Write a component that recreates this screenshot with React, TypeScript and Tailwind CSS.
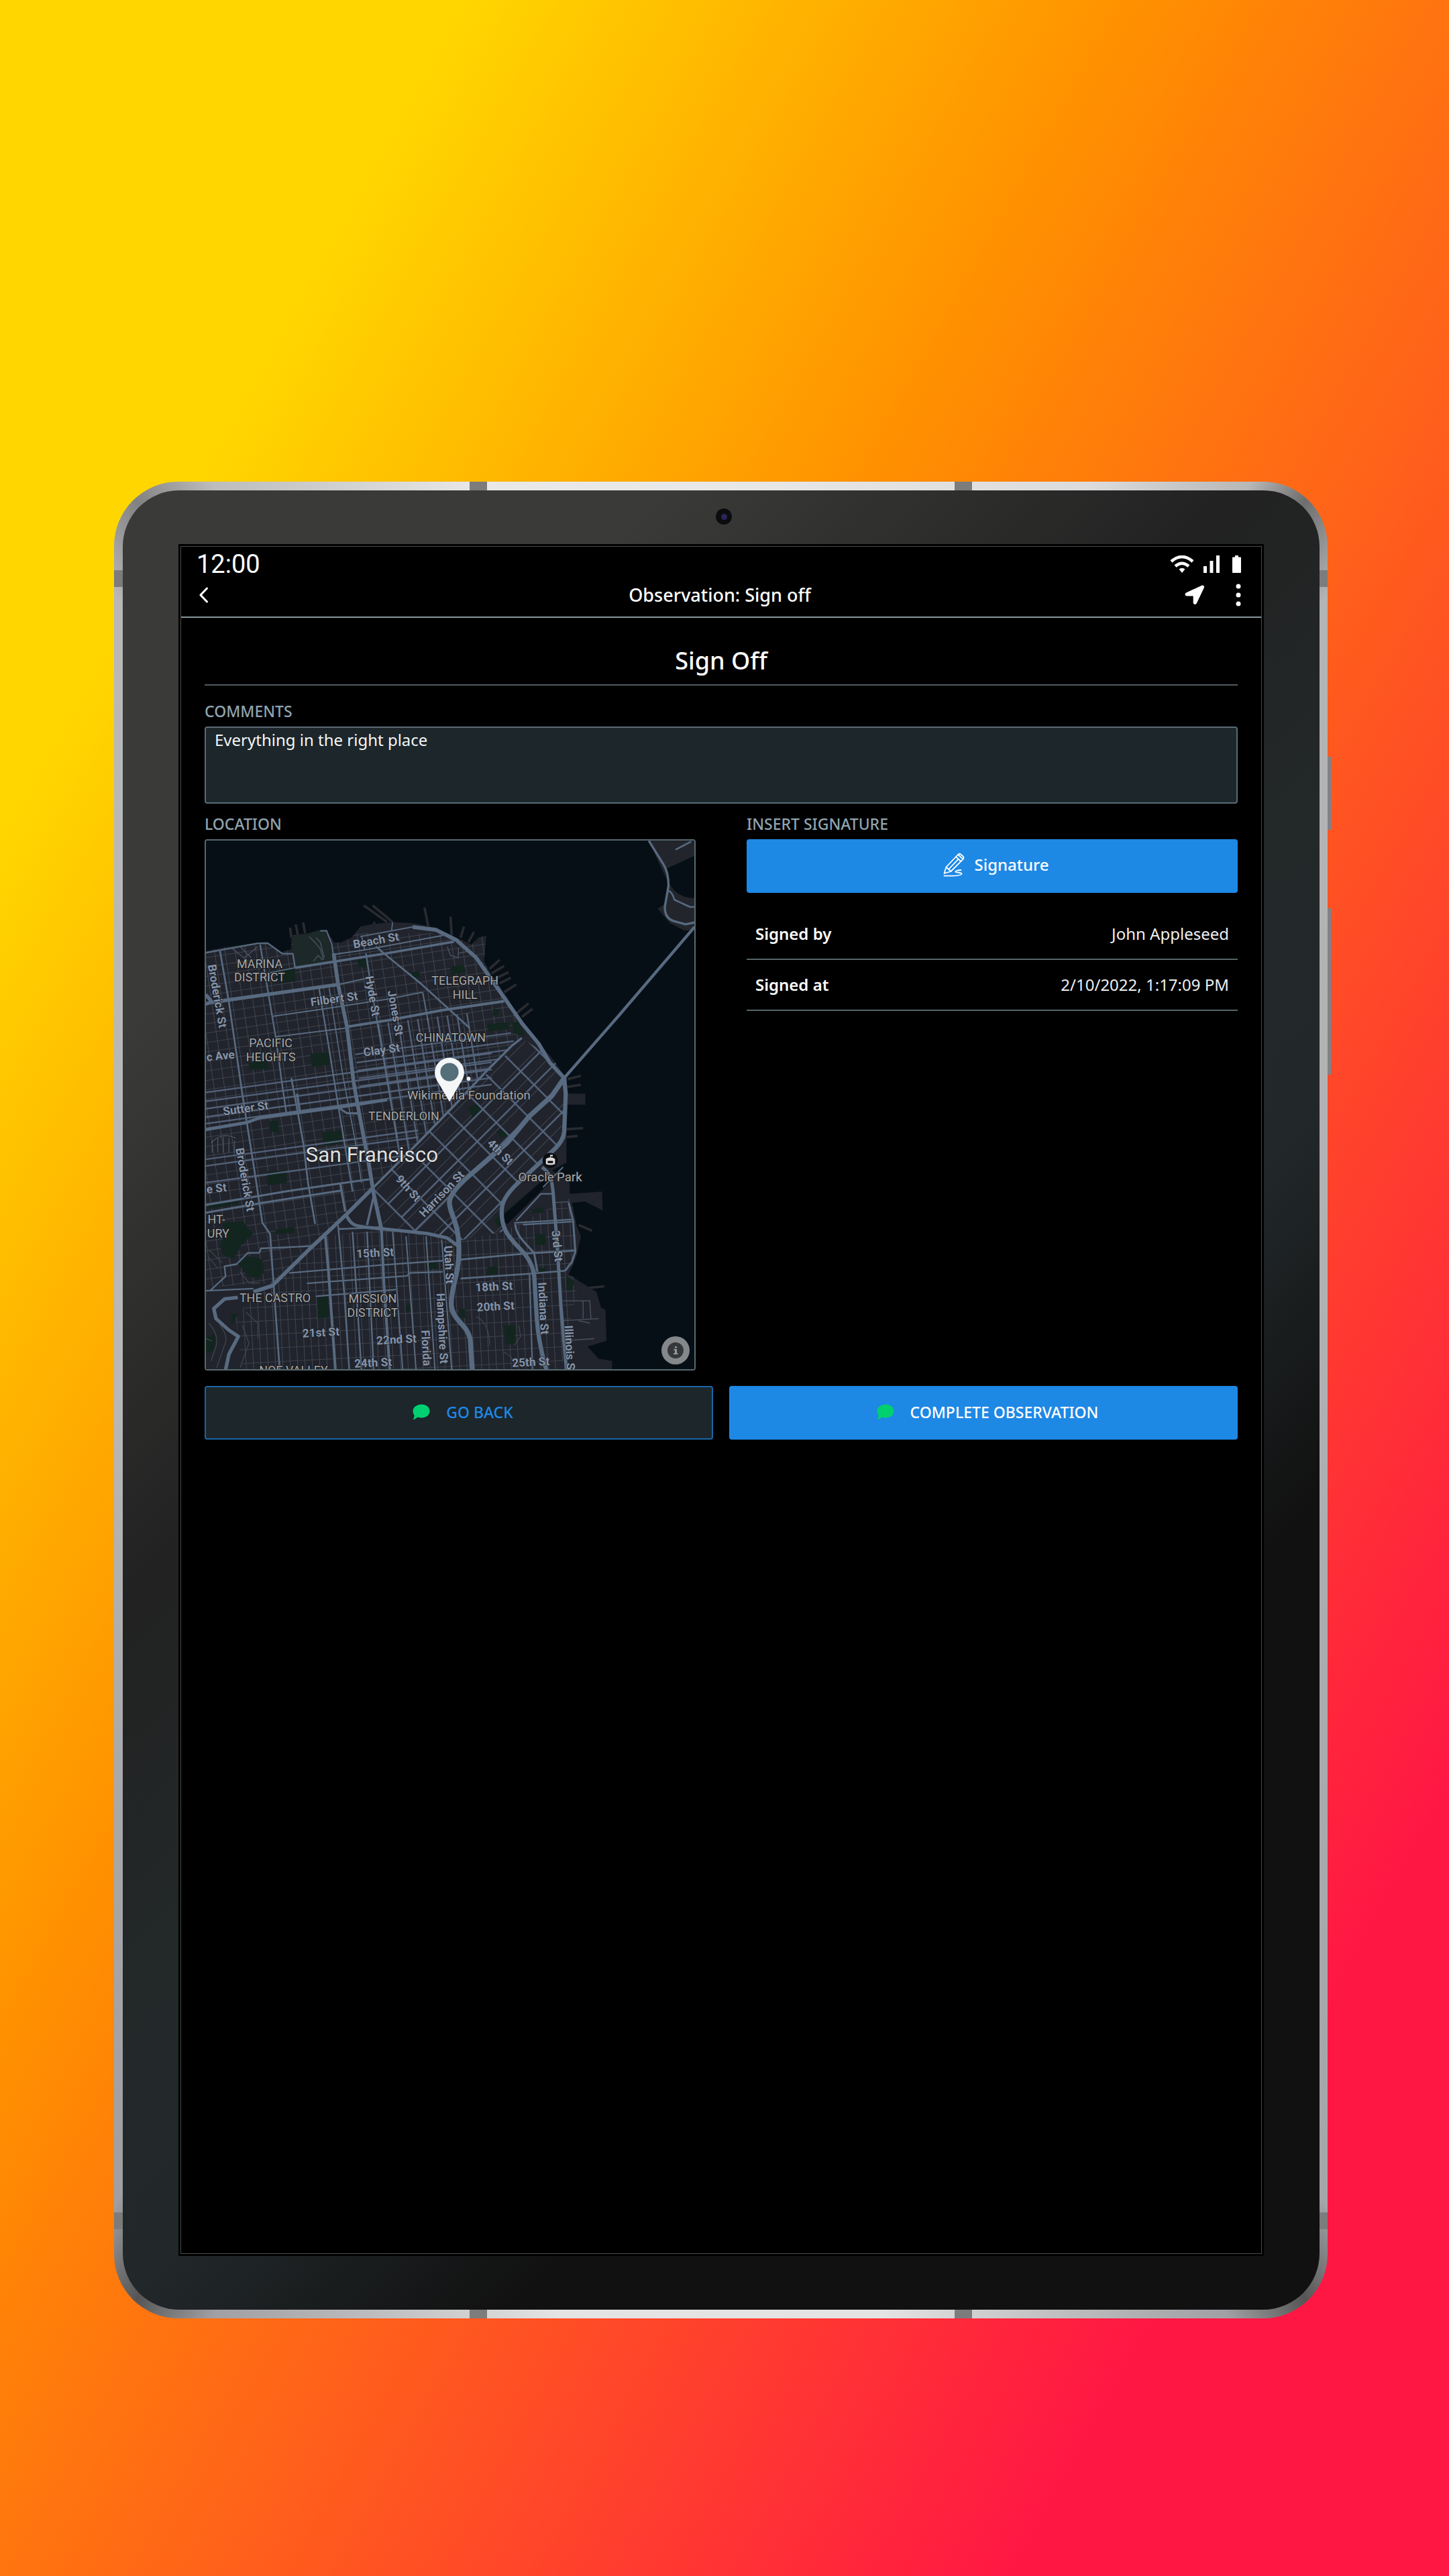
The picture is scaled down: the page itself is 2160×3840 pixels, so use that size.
import { ReactNode } from 'react';

type StreetLabel = {
  text: string;
  x: number;
  y: number;
  rotate: number;
};

type Road = {
  d: string;
  width: number;
};

const roads: Road[] = [
  { d: 'M45 568L280 525H325L390 572H437L447 635', width: 7 },
  { d: 'M447 635L620 608L860 570L1160 518', width: 11 },
  { d: 'M620 575L760 555L1110 490M740 495L975 452M560 470L588 468L612 530L622 600', width: 6 },
  { d: 'M320 660L447 635M760 555L745 490M880 470L885 430', width: 5 },
  { d: 'M45 798L70 790L640 710M45 755L75 790', width: 16 },
  { d: 'M640 710L780 680M345 853L560 822L870 775L1020 745', width: 6 },
  { d: 'M360 945L680 905M1020 745L1045 880', width: 6 },
  { d: 'M810 540L870 590L1010 705L1230 905', width: 8 },
  { d: 'M680 900L870 870L1110 825L1385 785', width: 12 },
  { d: 'M110 560L150 790L210 1200L232 1340L270 1580L300 1780L335 1830L350 2050L378 2440', width: 8 },
  { d: 'M290 530L325 740L360 945L385 1130L408 1290', width: 7 },
  { d: 'M430 1130L460 1290L485 1430L505 1600L537 1785', width: 8 },
  { d: 'M555 730L600 1000L640 1250L692 1560L705 1640', width: 7 },
  { d: 'M600 725L660 1110L720 1430L745 1600', width: 5 },
  { d: 'M765 570L785 700L830 960L905 1400', width: 7 },
  { d: 'M650 1605L672 1730M800 1660L770 1790M470 1290L455 1200', width: 10 },
  { d: 'M45 1362L230 1330L290 1308L640 1262L860 1228', width: 14 },
  { d: 'M640 1262L680 1288H730', width: 9 },
  { d: 'M45 1700L400 1640L650 1603L780 1585M45 1735L300 1690L660 1634', width: 9 },
  { d: 'M260 2090L345 2062L520 1890L680 1740L795 1625', width: 17 },
  { d: 'M795 1625L1000 1420L1160 1255L1310 1095L1420 985L1465 950', width: 10 },
  { d: 'M45 2085L260 2075M290 1895L520 1885M65 2085L135 2020L130 1975L185 1965L235 1915H285L295 1895', width: 7 },
  { d: 'M190 2115L130 2122L82 2165L92 2210L150 2262L192 2290L150 2370L135 2440', width: 16 },
  { d: 'M675 1740C700 1805 730 1795 850 1808L1040 1828L1130 1848L1180 1885', width: 15 },
  { d: 'M620 570L640 710L680 900L710 1150L735 1290L775 1500L800 1650L835 1810', width: 17 },
  { d: 'M835 1810L845 2040L872 2440M583 1840L597 2000L628 2440', width: 12 },
  { d: 'M640 1790L668 2100L690 2440M705 1820L745 2440M770 1820L800 2440', width: 7 },
  { d: 'M885 1820L930 2440M945 1840L990 2440M1035 1840L1075 2440M1105 1855L1150 2440', width: 6 },
  { d: 'M420 2005L830 1970L1110 1950M500 2052L950 2018L960 2005L1110 2000M540 2110L900 2080', width: 7 },
  { d: 'M640 1808L830 1800M1190 1945L1480 1918L1700 1905M1190 2030L1480 2010L1660 1995', width: 8 },
  { d: 'M1500 2010L1512 2440M1650 1530L1560 1620', width: 6 },
  { d: 'M1440 1770L1550 1650H1610M1430 1780L1690 1765M1470 1788L1690 1775', width: 7 },
  { d: 'M1435 1785C1440 1840 1480 1870 1520 1915L1535 2000', width: 9 },
  { d: 'M1555 1530C1600 1560 1600 1600 1606 1650L1625 1900L1640 2150L1665 2440', width: 15 },
  { d: 'M1675 1690L1695 1770L1705 1910L1690 1955L1660 1995', width: 9 },
  { d: 'M975 452L1080 465L1170 510L1260 590L1330 690L1470 890L1540 975L1590 1060L1655 1130', width: 17 },
  { d: 'M1655 1130L1662 1200L1655 1370Q1652 1415 1600 1460L1460 1590Q1375 1665 1375 1720C1370 1800 1400 1840 1460 1900Q1520 1960 1522 2040L1532 2210Q1540 2320 1575 2440', width: 19 },
  { d: 'M1655 1130L1600 1210L1500 1300L1400 1420L1250 1550Q1140 1640 1140 1690C1140 1740 1185 1780 1182 1900C1185 2010 1145 2070 1148 2150C1155 2220 1215 2230 1233 2300L1242 2440', width: 22 },
  { d: 'M1655 1130L1900 850L2240 452', width: 13 },
  { d: 'M2035 65L2100 170Q2125 210 2123 270L2107 360Q2105 410 2145 425L2200 440L2240 432', width: 10 },
  { d: 'M2123 290Q2140 295 2150 330L2220 362H2240M2155 105L2225 68', width: 8 },
];

// paired offsets for the long parallel avenues west and downtown
const avenueStarts = [1195, 1235, 1268, 1305, 1335, 1495, 1525, 1600];
const downtownRows = [1040, 1078, 1114, 1150, 1186];
const downtownColumns = [870, 915, 960, 1005, 1050, 1095, 1140, 1185, 1230, 1275];
const somaCross = [0, 85, 170, 255, 340, 425, 510, 595, 680];
const somaLong = [70, 130, 190, 255, 320, 385];

const parks = [
  'M148 518L330 492L345 515L380 520V565L325 525L150 545Z',
  'M515 1022L598 1015L602 1070L522 1080Z',
  'M238 1062L325 1055L328 1088L242 1094Z',
  'M320 1550L405 1545L410 1600L325 1612Z',
  'M120 1780L215 1775L258 1830L205 1880L175 1940L130 1930L110 1885L135 1820Z',
  'M190 1965L240 1930L300 1945L308 2000L285 2030L235 2020Z',
  'M545 2115L592 2110L600 2205L550 2210Z',
  'M330 1325L370 1320L375 1375L335 1370Z',
  'M570 1375L655 1365V1425L575 1432Z',
  'M360 1810L445 1800V1825L362 1832Z',
  'M60 1700L190 1685V1695L62 1718Z',
  'M725 600L765 595L768 635L735 632Z',
  'M350 650L445 640L450 695L380 705Z',
  'M970 655L1005 650V680L975 678Z',
  'M1145 630L1200 620L1215 650L1145 670Z',
  'M1310 890L1410 878L1405 910L1315 920Z',
  'M1420 880L1450 880L1485 945L1430 930Z',
  'M1335 820L1360 820V850L1335 850Z',
  'M1350 1375L1375 1355L1405 1385L1375 1400Z',
  'M1225 1260L1270 1245L1285 1275L1245 1310Z',
  'M1340 1770L1560 1590L1400 1780L1360 1800Z',
  'M1510 1720L1560 1710V1735L1515 1735Z',
  'M1525 1830L1570 1830V1880L1525 1880Z',
  'M1310 1980L1355 1975V2010L1310 2015Z',
  'M1385 2240L1435 2240V2325L1390 2325Z',
  'M1665 2020L1700 2040L1690 2085L1665 2080Z',
  'M1180 2170L1210 2165V2210L1190 2200Z',
  'M1040 1960L1085 1955V1985L1045 1988Z',
  'M45 2300L90 2275L85 2350L45 2370Z',
  'M160 2190L190 2190L170 2230L160 2235Z',
  'M945 2152L970 2150V2178L945 2180Z',
  'M1540 1985L1575 1980L1570 2000H1540Z',
];

const piers =
  'M755 355L860 430M795 355L885 430M820 470L800 430M450 440L460 490M483 432L492 480M425 455L430 500M1145 405L1150 490M1028 365L1045 450M1205 450L1190 500M1250 475L1225 520M1320 640L1365 600M1330 660L1385 627M1345 685L1405 655M1365 705L1415 680M1385 745L1440 710M1440 840L1495 795M1465 855L1512 820M1670 1135L1730 1120M1670 1170L1730 1160M1660 1360L1740 1355M1665 1395L1715 1390M1720 1790L1780 1815M1740 2075L1835 2065';

const districtLabels = [
  { text: 'MARINA', x: 288, y: 635 },
  { text: 'DISTRICT', x: 288, y: 697 },
  { text: 'PACIFIC', x: 338, y: 993 },
  { text: 'HEIGHTS', x: 338, y: 1055 },
  { text: 'TELEGRAPH', x: 1210, y: 712 },
  { text: 'HILL', x: 1210, y: 774 },
  { text: 'CHINATOWN', x: 1146, y: 968 },
  { text: 'TENDERLOIN', x: 935, y: 1321 },
  { text: 'HT-', x: 94, y: 1784 },
  { text: 'URY', x: 102, y: 1846 },
  { text: 'THE CASTRO', x: 357, y: 2137 },
  { text: 'MISSION', x: 795, y: 2139 },
  { text: 'DISTRICT', x: 795, y: 2203 },
  { text: 'NOE VALLEY', x: 440, y: 2460 },
];

const streetLabels: StreetLabel[] = [
  { text: 'Beach St', x: 810, y: 512, rotate: -10 },
  { text: 'Filbert St', x: 622, y: 775, rotate: -8 },
  { text: 'Clay St', x: 835, y: 1004, rotate: -8 },
  { text: 'c Ave', x: 112, y: 1030, rotate: -6 },
  { text: 'Sutter St', x: 225, y: 1266, rotate: -8 },
  { text: 'Broderick St', x: 98, y: 762, rotate: 80 },
  { text: 'Hyde St', x: 795, y: 762, rotate: 80 },
  { text: 'Jones St', x: 898, y: 838, rotate: 80 },
  { text: 'e St', x: 94, y: 1625, rotate: -6 },
  { text: 'Broderick St', x: 223, y: 1586, rotate: 80 },
  { text: '9th St', x: 955, y: 1625, rotate: 48 },
  { text: 'Harrison St', x: 1105, y: 1650, rotate: -46 },
  { text: '4th St', x: 1368, y: 1462, rotate: 45 },
  { text: '15th St', x: 806, y: 1915, rotate: -3 },
  { text: '21st St', x: 563, y: 2272, rotate: -3 },
  { text: '22nd St', x: 902, y: 2304, rotate: -3 },
  { text: '24th St', x: 797, y: 2408, rotate: -3 },
  { text: '18th St', x: 1340, y: 2066, rotate: -3 },
  { text: '20th St', x: 1347, y: 2155, rotate: -3 },
  { text: '25th St', x: 1505, y: 2405, rotate: -3 },
  { text: 'Utah St', x: 1138, y: 1968, rotate: 87 },
  { text: 'Hampshire St', x: 1108, y: 2254, rotate: 87 },
  { text: 'Florida', x: 1036, y: 2342, rotate: 87 },
  { text: '3rd St', x: 1624, y: 1884, rotate: 84 },
  { text: 'Indiana St', x: 1562, y: 2164, rotate: 87 },
  { text: 'Illinois S', x: 1680, y: 2340, rotate: 87 },
];

const LAND =
  'M45 560L150 540L320 518L385 565L430 552V490L500 482L560 465L590 470L622 522L650 522L700 500L740 450L790 440L880 430L980 435L1080 455L1170 500L1240 530L1270 500L1305 490L1295 610L1325 660L1400 770L1460 870L1520 950L1600 1040L1665 1130L1672 1200H1750V1250H1670L1665 1400V1510L1600 1545L1680 1600V1650L1825 1640L1828 1725L1750 1685L1690 1690L1710 1790L1730 1840L1710 1930L1675 2010L1720 2040L1800 2090L1820 2160L1840 2170L1845 2310L1760 2335L1810 2390L1870 2400V2440H45Z';

function CityMap() {
  return (
    <svg
      viewBox="45 64 2196 2373"
      preserveAspectRatio="xMidYMid slice"
      className="block h-full w-full"
      role="img"
      aria-label="Map of San Francisco"
    >
      <defs>
        <clipPath id="land">
          <path d={LAND} />
        </clipPath>
        <clipPath id="soma">
          <path d="M795 1625L1465 950L1600 1040L1665 1130L1660 1400L1380 1680L1380 1820L1180 1860L850 1810Z" />
        </clipPath>
        <clipPath id="downtown">
          <path d="M700 900L1380 820L1430 970L1160 1250L800 1610Z" />
        </clipPath>
        <pattern id="gridWest" width="46" height="42" patternUnits="userSpaceOnUse" patternTransform="rotate(-8.5)">
          <path d="M0 1H46M1 0V42" stroke="#444a56" strokeWidth="3" />
        </pattern>
        <pattern id="gridSoma" width="43" height="64" patternUnits="userSpaceOnUse" patternTransform="rotate(-45)">
          <path d="M0 1H43" stroke="#474f5c" strokeWidth="3" />
        </pattern>
        <pattern id="gridMission" width="33" height="62" patternUnits="userSpaceOnUse" patternTransform="rotate(-3)">
          <path d="M0 1H33M1 0V62" stroke="#444a56" strokeWidth="3" />
        </pattern>
      </defs>

      <rect x="45" y="64" width="2196" height="2373" fill="#070f16" />
      <path d={piers} stroke="#292b31" strokeWidth="11" fill="none" />
      <path d={LAND} fill="#21242c" />
      <path
        d="M2035 65H2245V130L2115 190L2123 250Q2160 325 2245 322V465L2195 468L2130 435L2075 370L2105 350L2120 250Z"
        fill="#22252b"
      />

      <g clipPath="url(#land)" fill="none">
        <path d="M45 480H1480L1465 950L795 1625L583 1840L350 2050L45 2070Z" fill="url(#gridWest)" />
        <path d="M795 1625L1465 950L1665 1130L1660 1400L1380 1680V1820L1180 1860L850 1810Z" fill="url(#gridSoma)" />
        <path d="M300 2075L583 1840L850 1810L1180 1860L1380 1820L1700 1660L1720 2040L1640 2440H210L180 2200Z" fill="url(#gridMission)" />
        <path d="M432 495L560 465L590 475L622 600L447 632Z" fill="#1d2828" />
        {parks.map((d, index) => (
          <path key={index} d={d} fill="#12251f" />
        ))}
        <path d="M1365 1760L1580 1570L1600 1590L1400 1785Z" fill="#070f16" />
        <path
          d="M510 495L535 520L560 550L575 600M540 500L560 520L578 590M530 605L550 580L570 600M160 545L230 600M200 540L250 590M280 540L220 590M70 1420Q120 1370 180 1400M75 1465V1410M100 1465V1400M125 1465V1395M150 1465V1400M175 1470V1410M1130 540L1145 580L1180 590V545M1180 570L1230 560M1700 2130H1770L1775 2210M1740 2130V2210M1650 2130H1700M1640 2220L1810 2210M1720 2220L1770 2230M1640 2310L1790 2300M1600 1690L1680 1685"
          stroke="#4b5564"
          strokeWidth="4"
        />
        <path
          d="M60 1900L120 1960M55 1930L100 1985M200 2000L240 2050H290M60 2230Q110 2290 90 2340L70 2400M110 2240Q150 2290 130 2330L95 2430M210 2240L240 2320L200 2430M45 2300L75 2310M225 2180L280 2230V2300M1450 2240L1460 2290L1430 2330M1380 2360Q1420 2370 1440 2430M1260 2200Q1320 2230 1320 2330"
          stroke="#40444e"
          strokeWidth="4"
        />
        <g stroke="#56677f" strokeOpacity="0.9">
          {avenueStarts.map((y) => (
            <path key={y} d={`M45 ${y}L${y > 1400 ? 1000 : 1330} ${y - (y > 1400 ? 130 : 176)}`} strokeWidth="7" />
          ))}
          <g clipPath="url(#downtown)">
            {downtownRows.map((y) => (
              <path key={y} d={`M600 ${y}L1460 ${y - 118}`} strokeWidth="7" />
            ))}
            {downtownColumns.map((x) => (
              <path key={x} d={`M${x - 60} 820L${x + 50} 1500`} strokeWidth="7" />
            ))}
          </g>
          <g clipPath="url(#soma)">
            {somaCross.map((offset) => (
              <path key={offset} d={`M${795 + offset} ${1625 - offset}L${1295 + offset} ${2125 - offset}`} strokeWidth="8" />
            ))}
            {somaLong.map((offset) => (
              <path key={offset} d={`M${795 + offset} ${1625 + offset}L${1495 + offset} ${925 + offset}`} strokeWidth="8" />
            ))}
          </g>
        </g>
      </g>

      <g fill="none" stroke="#586a80" strokeLinejoin="round">
        {roads.map((road, index) => (
          <path key={index} d={road.d} strokeWidth={road.width} />
        ))}
      </g>

      <g
        className="font-['Roboto',sans-serif] text-[52px] font-bold"
        fill="#8593a8"
        stroke="#1b1f27"
        strokeWidth="4"
        paintOrder="stroke"
        textAnchor="middle"
        dominantBaseline="central"
      >
        {streetLabels.map((label, index) => (
          <text key={index} x={label.x} y={label.y} transform={`rotate(${label.rotate} ${label.x} ${label.y})`}>
            {label.text}
          </text>
        ))}
      </g>

      <g
        className="font-['Roboto',sans-serif] text-[54px]"
        fill="#a8a8a8"
        stroke="#15181d"
        strokeWidth="6"
        paintOrder="stroke"
        textAnchor="middle"
      >
        {districtLabels.map((label, index) => (
          <text key={index} x={label.x} y={label.y}>
            {label.text}
          </text>
        ))}
        <text x="1227" y="1225" className="text-[56px]">
          Wikimedia Foundation
        </text>
        <text x="1592" y="1593" className="text-[56px]">
          Oracle Park
        </text>
        <text x="792" y="1507" className="text-[95px]" fill="#dedede">
          San Francisco
        </text>
      </g>

      <circle cx="1226" cy="1133" r="9" fill="#e8e8e8" />
      <circle cx="1592" cy="1500" r="34" fill="#0b0d10" />
      <path d="M1573 1493Q1593 1480 1614 1493V1516Q1593 1524 1573 1516ZM1592 1488V1475H1604V1482H1595V1488Z" fill="#dcdcdc" />
      <path d="M1581 1502H1605V1512H1581Z" fill="#111" />

      <path d="M1140 1236L1092 1154Q1074 1128 1074 1105A66 66 0 0 1 1206 1105Q1206 1128 1188 1154Z" fill="#f4f6f7" />
      <circle cx="1140" cy="1103" r="41" fill="#546e7a" />
    </svg>
  );
}

function StatusBar() {
  return (
    <div className="flex h-[52px] items-center justify-between pr-[30px] pl-[23px]">
      <span className="font-['Roboto',sans-serif] text-[38px] leading-none">12:00</span>
      <div className="flex items-center gap-[14px]">
        <svg width="36" height="26" viewBox="0 0 36 26" fill="none" stroke="#fff" aria-hidden="true">
          <path d="M2 9Q18 -5 34 9" strokeWidth="4.5" />
          <path d="M8 16Q18 7.500 28 16" strokeWidth="4.500" />
          <path d="M13.500 20.500Q18 17 22.500 20.500L18 26Z" fill="#fff" stroke="none" />
        </svg>
        <svg width="24" height="26" viewBox="0 0 24 26" fill="#fff" aria-hidden="true">
          <path d="M0 16H5V26H0ZM9.500 8H14.500V26H9.500ZM19 0H24V26H19Z" />
        </svg>
        <svg width="13" height="26" viewBox="0 0 13 26" fill="#fff" className="ml-[5px]" aria-hidden="true">
          <path d="M4 0H9V2.500H12Q13 2.500 13 3.500V25Q13 26 12 26H1Q0 26 0 25V3.500Q0 2.500 1 2.500H4Z" />
        </svg>
      </div>
    </div>
  );
}

function AppHeader() {
  return (
    <header className="grid h-[54px] grid-cols-[1fr_auto_1fr] items-center border-b-2 border-[#87959b] pr-[30px] pb-[14px] pl-[26px]">
      <button type="button" aria-label="Back" className="justify-self-start">
        <svg width="15" height="24" viewBox="0 0 15 24" fill="none" stroke="#fff" strokeWidth="3" strokeLinecap="round" strokeLinejoin="round">
          <path d="M12.500 2L3 12L12.500 22" />
        </svg>
      </button>
      <h1 className="text-[27px] leading-10 font-medium">Observation: Sign off</h1>
      <div className="flex items-center gap-[46px] justify-self-end">
        <button type="button" aria-label="Locate">
          <svg width="30" height="30" viewBox="0 0 30 30" fill="#fff">
            <path d="M25.500 .8L2.300 11.400C-.4 12.700 .3 16.500 3.400 16.500H12.700V26C12.700 29.400 16.600 30 17.900 27.300L28.800 4.200C29.800 1.900 27.700 -.2 25.500 .8Z" />
          </svg>
        </button>
        <button type="button" aria-label="More options">
          <svg width="8" height="34" viewBox="0 0 8 34" fill="#fff">
            <circle cx="4" cy="4" r="3.500" />
            <circle cx="4" cy="17" r="3.500" />
            <circle cx="4" cy="30" r="3.500" />
          </svg>
        </button>
      </div>
    </header>
  );
}

function SignatureIcon() {
  return (
    <svg width="32" height="36" viewBox="0 0 32 36" fill="none" stroke="#fff" strokeWidth="1.8" strokeLinecap="round" strokeLinejoin="round" aria-hidden="true">
      <path d="M1.500 31L4.500 21.500L22 3Q24 .8 26 2.500L29.500 5.500Q31.500 7.500 29.500 9.800L11.500 28L1.500 31Z" />
      <path d="M4.500 21.500L11.500 28M19 6.200L26.300 13M22.200 3L29.500 9.800M8 25L22.600 9.600" />
      <path d="M1.500 34.500C10 34.800 26 35.500 27.500 31.500C28 29 17.500 30.500 18.500 28C19 26.500 23 26.200 26.500 26" />
    </svg>
  );
}

function BubbleIcon() {
  return (
    <svg width="26" height="24" viewBox="0 0 26 24" fill="#00d070" aria-hidden="true">
      <path d="M13.500 .5C20.500 .5 25.500 4.800 25.500 10.500S20.500 20.500 13.500 20.500C11.500 20.500 9.500 20.200 7.800 19.500C5.500 21.500 3 22.800 .5 23C2 21 2.600 18.800 2.600 16.700C1.200 15 .5 12.900 .5 10.500C.5 4.800 6.500 .5 13.500 .5Z" />
    </svg>
  );
}

function SectionLabel({ children }: { children: ReactNode }) {
  return <h3 className="mb-[9px] text-[23px] leading-7 font-medium text-[#90a4ae]">{children}</h3>;
}

const details = [
  { name: 'Signed by', value: 'John Appleseed' },
  { name: 'Signed at', value: '2/10/2022, 1:17:09 PM' },
];

function SignOffForm() {
  return (
    <main className="px-[35px]">
      <h2 className="border-b-2 border-[#4f5b60] pt-9 pb-[7px] text-center text-4xl leading-[56px] font-medium">Sign Off</h2>

      <label htmlFor="comments" className="mt-6 mb-[9px] block text-[23px] leading-7 font-medium text-[#90a4ae]">
        COMMENTS
      </label>
      <textarea
        id="comments"
        defaultValue="Everything in the right place"
        className="block h-[115px] w-full resize-none rounded-[4px] border-2 border-[#5a6b75] bg-[#1c262b] px-[13px] py-[2px] text-2xl leading-8 text-[#f4f6f7] outline-none"
      />

      <div className="mt-4 grid grid-cols-2 gap-[76px]">
        <section>
          <SectionLabel>LOCATION</SectionLabel>
          <div className="relative h-[792px] overflow-hidden rounded-[4px] border-2 border-[#56696f]">
            <CityMap />
            <button
              type="button"
              aria-label="Map attribution"
              className="absolute right-[7px] bottom-[7px] flex size-[42px] items-center justify-center rounded-full bg-[#84888b]"
            >
              <svg width="24" height="24" viewBox="0 0 24 24" aria-hidden="true">
                <circle cx="12" cy="12" r="12" fill="#35373a" />
                <path d="M11 6H14V8.500H11ZM9.500 10H14V16H15.500V18H9V16H11V12H9.500Z" fill="#94989b" />
              </svg>
            </button>
          </div>
        </section>

        <section>
          <SectionLabel>INSERT SIGNATURE</SectionLabel>
          <button
            type="button"
            className="flex h-20 w-full items-center justify-center gap-[14px] rounded-[4px] bg-[#1e88e5] pb-1 pl-3 text-2xl font-medium"
          >
            <SignatureIcon />
            Signature
          </button>
          <dl className="mt-6">
            {details.map((detail) => (
              <div key={detail.name} className="flex h-[76px] items-center justify-between border-b-2 border-[#566569] px-[13px] text-2xl">
                <dt className="font-semibold">{detail.name}</dt>
                <dd className="text-[#eceff1]">{detail.value}</dd>
              </div>
            ))}
          </dl>
        </section>
      </div>

      <div className="mt-[23px] grid grid-cols-2 gap-6 text-[23px] font-medium">
        <button
          type="button"
          className="flex h-20 items-center justify-center gap-6 rounded-[4px] border-2 border-[#1b65a6] bg-[#1c262b] pb-[2px] pl-3 text-[#1e88e5]"
        >
          <BubbleIcon />
          GO BACK
        </button>
        <button type="button" className="flex h-20 items-center justify-center gap-6 rounded-[4px] bg-[#1e88e5] pb-[2px] pl-3">
          <BubbleIcon />
          COMPLETE OBSERVATION
        </button>
      </div>
    </main>
  );
}

export default function App() {
  return (
    <div className="flex min-h-screen bg-[linear-gradient(119deg,#ffd600_16%,#ff8f00_40%,#ff1744_85%)] pt-[718px] pr-[181px] pb-[384px] pl-[170px]">
      <div className="relative flex flex-1 rounded-[96px] bg-[conic-gradient(#e8e8e8_0deg,#dcdcdc_22deg,#b8b8b8_30deg,#6e6e6e_33deg,#b4b4b4_37deg,#b0b0b2_90deg,#a6a6aa_143deg,#555_147deg,#a0a0a4_151deg,#e4e4e4_170deg,#e4e4e4_190deg,#a0a0a4_209deg,#555_213deg,#a0a0a4_217deg,#b8b8b8_270deg,#b8b8b8_323deg,#828282_327deg,#bdbdbd_331deg,#e8e8e8_345deg)] py-[13px] pr-3 pl-[13px]">
        {/* antenna bands */}
        <div className="absolute inset-x-0 top-[132px] h-[25px] bg-[#7c7c7c]" />
        <div className="absolute inset-x-0 bottom-[133px] h-[25px] bg-[#7c7c7c]" />
        <div className="absolute inset-y-0 left-[530px] w-[26px] bg-[#7c7c7c]" />
        <div className="absolute inset-y-0 right-[530px] w-[26px] bg-[#7c7c7c]" />
        {/* side keys */}
        <div className="absolute top-[410px] -right-[5px] h-[109px] w-[5px] bg-[#7e8288]" />
        <div className="absolute top-[636px] -right-[5px] h-[248px] w-[5px] bg-[#7e8288]" />

        <div className="relative flex flex-1 rounded-[84px] bg-[linear-gradient(135deg,#3a3a38_0%,#3a3a38_18%,#222_37%,#232829_50%,#22282a_60%,#111_73%)] pt-20 pr-[83px] pb-20 pl-[83px]">
          <div className="absolute top-[27px] left-1/2 flex size-6 -translate-x-2 items-center justify-center rounded-full bg-[#0c0c0e]">
            <div className="size-[9px] rounded-full bg-[#29245a]" />
          </div>
          <div className="flex flex-1 bg-black p-[3px]">
            <div className="flex-1 border border-[#4a4a4a] bg-black font-['Noto_Sans',sans-serif] text-white">
              <StatusBar />
              <AppHeader />
              <SignOffForm />
            </div>
          </div>
        </div>
      </div>
    </div>
  );
}
